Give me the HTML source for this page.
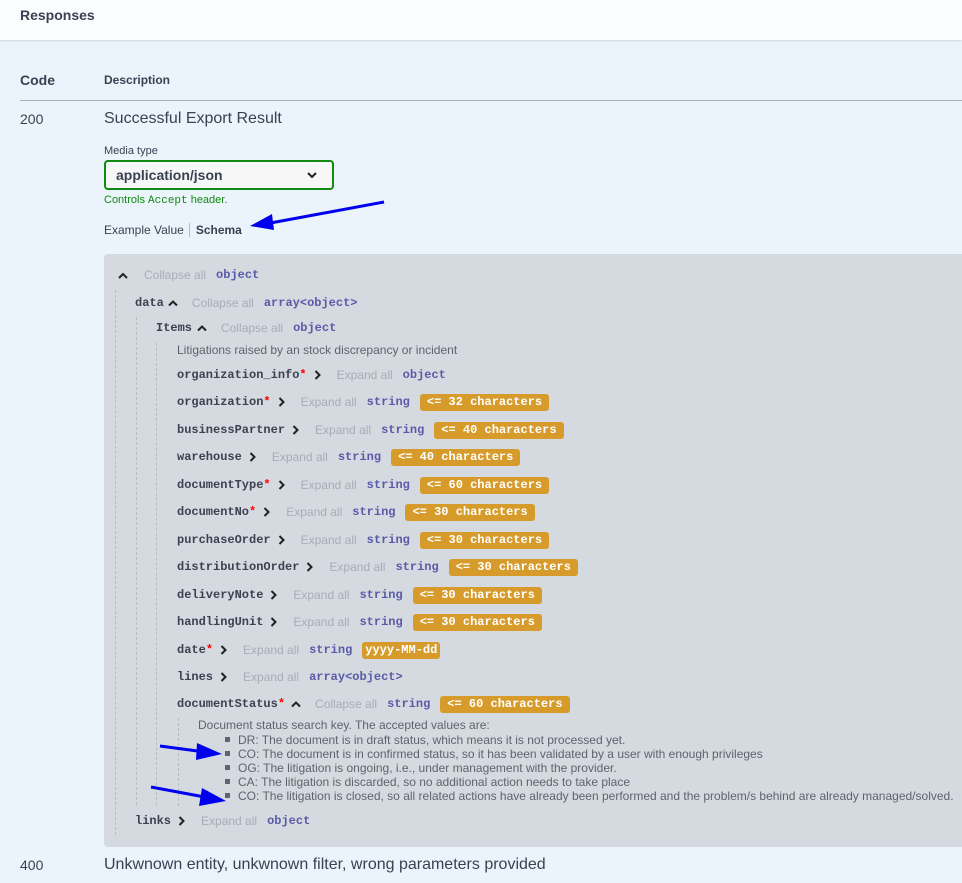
<!DOCTYPE html>
<html><head><meta charset="utf-8"><style>
*{margin:0;padding:0;box-sizing:border-box}
body{width:962px;height:883px;overflow:hidden;background:#ebf3fb;font-family:"Liberation Sans",sans-serif;color:#3b4151;position:relative}
.hdr{position:absolute;left:0;top:0;width:962px;height:40px;background:#fafcfe;box-shadow:0 1px 2px rgba(0,0,0,.12)}
.abs{position:absolute;white-space:nowrap}
.box{position:absolute;left:104px;top:254px;width:870px;height:593px;background:#d5dae0;border-radius:4px}
.row{position:absolute;height:18px;display:flex;align-items:center;white-space:nowrap}
.n{font-family:"Liberation Mono",monospace;font-weight:bold;font-size:12px;color:#3b4151}
.r{color:#f00;font-family:"Liberation Mono",monospace;font-weight:bold;font-size:12px}
.ch{margin-left:6px;width:10px;height:10px}
.ex{margin-left:14px;font-size:12px;color:#a8adb5}
.t{margin-left:10px;font-family:"Liberation Mono",monospace;font-weight:bold;font-size:12px;color:#5a5aa8}
.b{margin-left:10px;background:#d69b2b;color:#fff;font-family:"Liberation Mono",monospace;font-weight:bold;font-size:12px;padding:0 7px;height:17px;line-height:17px;border-radius:3px}
.dl{position:absolute;border-left:1px dashed #b8bcc2;width:0}
.d{font-size:12px;color:#5f636b}
.bl{display:inline-block;width:5px;height:5px;background:#5f636b;margin:0 8px 2px 0}
</style></head><body>
<div class="hdr"></div>
<div class="abs" style="left:20px;top:7px;font-size:14px;font-weight:bold">Responses</div>
<div class="abs" style="left:20px;top:72px;font-size:14px;font-weight:bold">Code</div>
<div class="abs" style="left:104px;top:73px;font-size:12px;font-weight:bold">Description</div>
<div class="abs" style="left:20px;top:100px;width:942px;border-top:1px solid #a9afb8"></div>
<div class="abs" style="left:20px;top:111px;font-size:14px">200</div>
<div class="abs" style="left:104px;top:110px;font-size:16px">Successful Export Result</div>
<div class="abs" style="left:104px;top:145px;font-size:11px">Media type</div>
<div class="abs" style="left:104px;top:160px;width:230px;height:30px;border:2px solid #118a11;border-radius:4px;background:#f7f7f7;font-size:14px;font-weight:bold;padding:5px 10px">application/json
<svg style="position:absolute;right:14px;top:9px" width="12" height="8" viewBox="0 0 12 8"><path d="M2 2l4 4 4-4" stroke="#222" stroke-width="2" fill="none"/></svg></div>
<div class="abs" style="left:104px;top:194px;font-size:11px;color:#118a11">Controls <span style="font-family:'Liberation Mono',monospace">Accept</span> header.</div>
<div class="abs" style="left:104px;top:223px;font-size:12px">Example Value<span style="display:inline-block;width:1px;height:14px;background:#bbb;margin:0 6px -3px 5px"></span><b>Schema</b></div>
<div class="box"></div>
<div class="dl" style="left:115px;top:290px;height:545px"></div>
<div class="dl" style="left:136px;top:317px;height:488px"></div>
<div class="dl" style="left:156px;top:343px;height:462px"></div>
<div class="dl" style="left:178px;top:718px;height:88px"></div>

<div class="row" style="left:118px;top:266px"><svg width="10" height="9" viewBox="0 0 10 9"><path d="M1 7l4-4 4 4" stroke="#222" stroke-width="2" fill="none"/></svg><span class="ex" style="margin-left:16px">Collapse all</span><span class="t">object</span></div>
<div class="row" style="left:135px;top:294px"><span class="n">data</span><svg class="ch" style="margin-left:4px" viewBox="0 0 10 9"><path d="M1 7l4-4 4 4" stroke="#222" stroke-width="2" fill="none"/></svg><span class="ex" style="margin-left:14px">Collapse all</span><span class="t">array&lt;object&gt;</span></div>
<div class="row" style="left:156px;top:319px"><span class="n">Items</span><svg class="ch" style="margin-left:5px" viewBox="0 0 10 9"><path d="M1 7l4-4 4 4" stroke="#222" stroke-width="2" fill="none"/></svg><span class="ex" style="margin-left:14px">Collapse all</span><span class="t">object</span></div>
<div class="abs d" style="left:177px;top:343px">Litigations raised by an stock discrepancy or incident</div>

<div class="row" style="left:177px;top:366px"><span class="n">organization_info</span><span class="r">*</span><svg class="ch" viewBox="0 0 9 10"><path d="M2 1l4 4-4 4" stroke="#222" stroke-width="2" fill="none"/></svg><span class="ex">Expand all</span><span class="t">object</span></div>
<div class="row" style="left:177px;top:393px"><span class="n">organization</span><span class="r">*</span><svg class="ch" viewBox="0 0 9 10"><path d="M2 1l4 4-4 4" stroke="#222" stroke-width="2" fill="none"/></svg><span class="ex">Expand all</span><span class="t">string</span><span class="b">&lt;= 32 characters</span></div>
<div class="row" style="left:177px;top:421px"><span class="n">businessPartner</span><svg class="ch" viewBox="0 0 9 10"><path d="M2 1l4 4-4 4" stroke="#222" stroke-width="2" fill="none"/></svg><span class="ex">Expand all</span><span class="t">string</span><span class="b">&lt;= 40 characters</span></div>
<div class="row" style="left:177px;top:448px"><span class="n">warehouse</span><svg class="ch" viewBox="0 0 9 10"><path d="M2 1l4 4-4 4" stroke="#222" stroke-width="2" fill="none"/></svg><span class="ex">Expand all</span><span class="t">string</span><span class="b">&lt;= 40 characters</span></div>
<div class="row" style="left:177px;top:476px"><span class="n">documentType</span><span class="r">*</span><svg class="ch" viewBox="0 0 9 10"><path d="M2 1l4 4-4 4" stroke="#222" stroke-width="2" fill="none"/></svg><span class="ex">Expand all</span><span class="t">string</span><span class="b">&lt;= 60 characters</span></div>
<div class="row" style="left:177px;top:503px"><span class="n">documentNo</span><span class="r">*</span><svg class="ch" viewBox="0 0 9 10"><path d="M2 1l4 4-4 4" stroke="#222" stroke-width="2" fill="none"/></svg><span class="ex">Expand all</span><span class="t">string</span><span class="b">&lt;= 30 characters</span></div>
<div class="row" style="left:177px;top:531px"><span class="n">purchaseOrder</span><svg class="ch" viewBox="0 0 9 10"><path d="M2 1l4 4-4 4" stroke="#222" stroke-width="2" fill="none"/></svg><span class="ex">Expand all</span><span class="t">string</span><span class="b">&lt;= 30 characters</span></div>
<div class="row" style="left:177px;top:558px"><span class="n">distributionOrder</span><svg class="ch" viewBox="0 0 9 10"><path d="M2 1l4 4-4 4" stroke="#222" stroke-width="2" fill="none"/></svg><span class="ex">Expand all</span><span class="t">string</span><span class="b">&lt;= 30 characters</span></div>
<div class="row" style="left:177px;top:586px"><span class="n">deliveryNote</span><svg class="ch" viewBox="0 0 9 10"><path d="M2 1l4 4-4 4" stroke="#222" stroke-width="2" fill="none"/></svg><span class="ex">Expand all</span><span class="t">string</span><span class="b">&lt;= 30 characters</span></div>
<div class="row" style="left:177px;top:613px"><span class="n">handlingUnit</span><svg class="ch" viewBox="0 0 9 10"><path d="M2 1l4 4-4 4" stroke="#222" stroke-width="2" fill="none"/></svg><span class="ex">Expand all</span><span class="t">string</span><span class="b">&lt;= 30 characters</span></div>
<div class="row" style="left:177px;top:641px"><span class="n">date</span><span class="r">*</span><svg class="ch" viewBox="0 0 9 10"><path d="M2 1l4 4-4 4" stroke="#222" stroke-width="2" fill="none"/></svg><span class="ex">Expand all</span><span class="t">string</span><span class="b" style="padding:0 3px">yyyy-MM-dd</span></div>
<div class="row" style="left:177px;top:668px"><span class="n">lines</span><svg class="ch" viewBox="0 0 9 10"><path d="M2 1l4 4-4 4" stroke="#222" stroke-width="2" fill="none"/></svg><span class="ex">Expand all</span><span class="t">array&lt;object&gt;</span></div>
<div class="row" style="left:177px;top:695px"><span class="n">documentStatus</span><span class="r">*</span><svg class="ch" viewBox="0 0 10 9"><path d="M1 7l4-4 4 4" stroke="#222" stroke-width="2" fill="none"/></svg><span class="ex">Collapse all</span><span class="t">string</span><span class="b">&lt;= 60 characters</span></div>
<div class="abs d" style="left:198px;top:718px">Document status search key. The accepted values are:</div>
<div class="abs d" style="left:225px;top:733px;line-height:14px">
<div><span class="bl"></span>DR: The document is in draft status, which means it is not processed yet.</div>
<div><span class="bl"></span>CO: The document is in confirmed status, so it has been validated by a user with enough privileges</div>
<div><span class="bl"></span>OG: The litigation is ongoing, i.e., under management with the provider.</div>
<div><span class="bl"></span>CA: The litigation is discarded, so no additional action needs to take place</div>
<div><span class="bl"></span>CO: The litigation is closed, so all related actions have already been performed and the problem/s behind are already managed/solved.</div>
</div>
<div class="row" style="left:135px;top:812px"><span class="n">links</span><svg class="ch" viewBox="0 0 9 10"><path d="M2 1l4 4-4 4" stroke="#222" stroke-width="2" fill="none"/></svg><span class="ex">Expand all</span><span class="t">object</span></div>

<div class="abs" style="left:20px;top:857px;font-size:14px">400</div>
<div class="abs" style="left:104px;top:856px;font-size:16px">Unkwnown entity, unkwnown filter, wrong parameters provided</div>
<svg class="abs" style="left:0;top:0" width="962" height="883"><g stroke="#0000ee" stroke-width="3" fill="#0000ee">
<line x1="384" y1="202" x2="265" y2="224"/><polygon points="250,226 272,214 274,230" stroke="none"/>
<line x1="160" y1="746" x2="205" y2="752"/><polygon points="222,754 197,743 196,760" stroke="none"/>
<line x1="151" y1="787" x2="210" y2="798"/><polygon points="226,801 202,788 199,806" stroke="none"/></g></svg>
</body></html>
